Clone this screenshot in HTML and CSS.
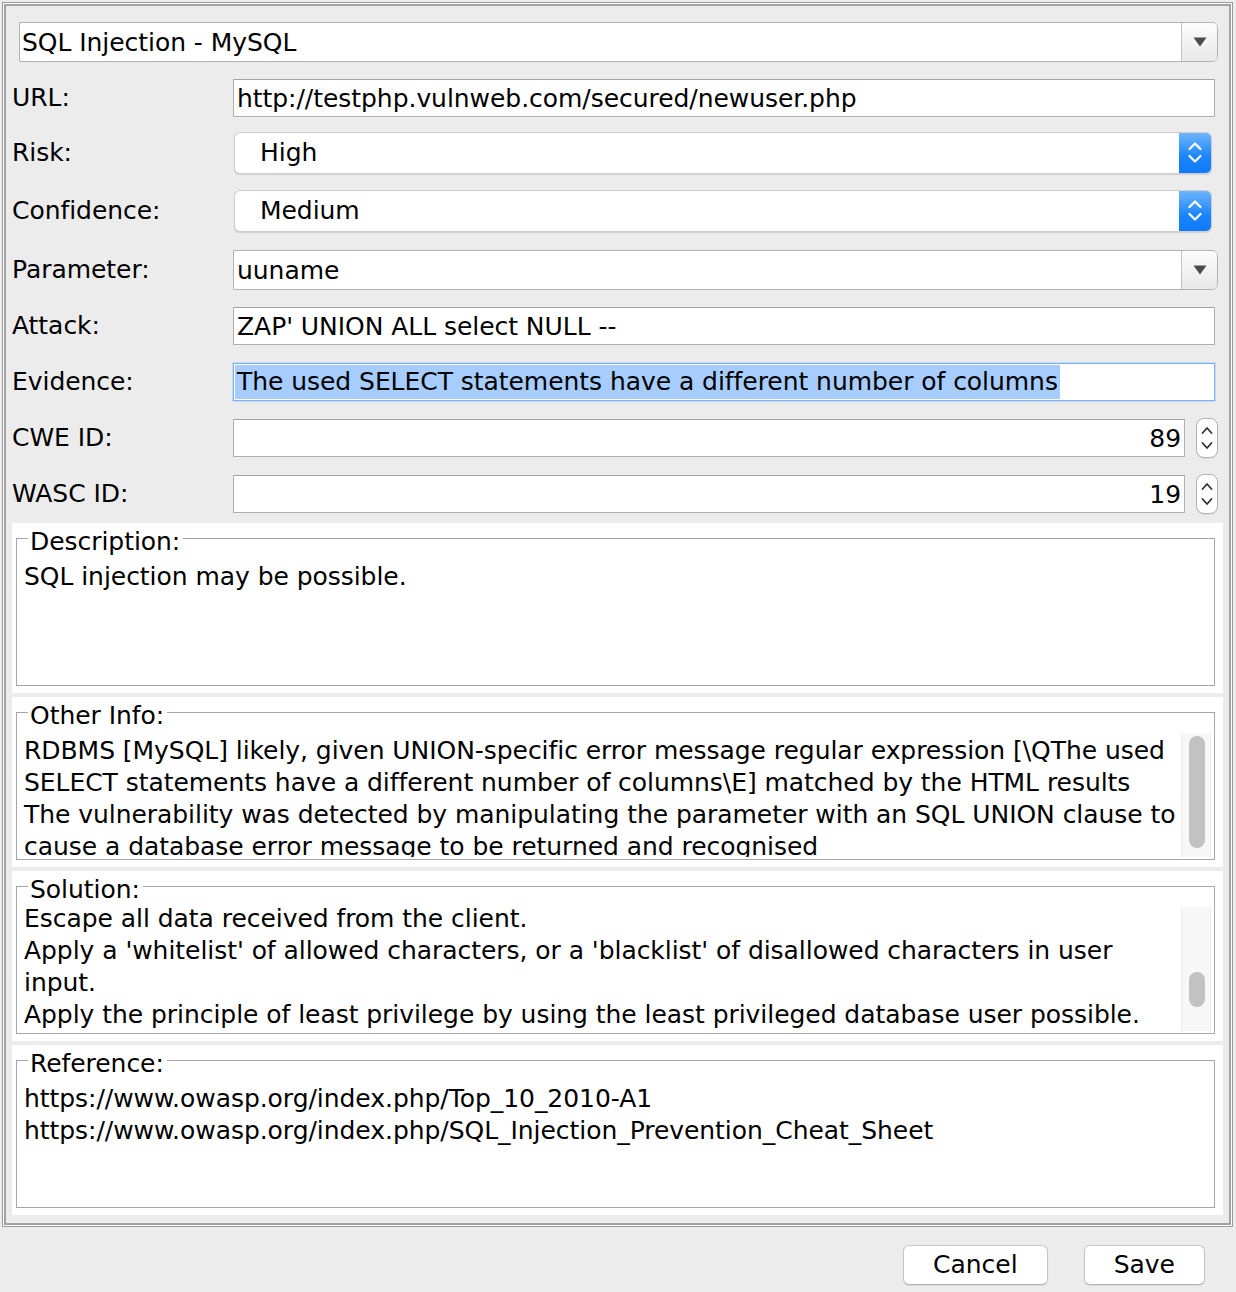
FILE: index.html
```html
<!DOCTYPE html>
<html lang="en">
<head>
<meta charset="utf-8">
<title>Edit Alert</title>
<link rel="stylesheet" href="styles.css">
</head>
<body>
<div class="frame">
  <div class="frame-inner">
    <div class="form">
      <div class="row">
        <div class="combo combo-main">
          <span class="combo-text">SQL Injection - MySQL</span>
          <span class="combo-btn"><svg width="14" height="10" viewBox="0 0 14 10"><path d="M0.5 0.5 H13.5 L7 9.5 Z" fill="#4a4a4a"/></svg></span>
        </div>
      </div>
      <div class="row">
        <span class="lbl">URL:</span>
        <div class="field field-text">http://testphp.vulnweb.com/secured/newuser.php</div>
      </div>
      <div class="row row-short">
        <span class="lbl">Risk:</span>
        <div class="popup">
          <span class="popup-text">High</span>
          <span class="popup-step"><svg width="14" height="26" viewBox="0 0 14 26"><path d="M1.5 9 L7 3.5 L12.5 9 M1.5 16 L7 21.5 L12.5 16" fill="none" stroke="#fff" stroke-width="2.2" stroke-linecap="round" stroke-linejoin="round"/></svg></span>
        </div>
      </div>
      <div class="row row-tall">
        <span class="lbl">Confidence:</span>
        <div class="popup">
          <span class="popup-text">Medium</span>
          <span class="popup-step"><svg width="14" height="26" viewBox="0 0 14 26"><path d="M1.5 9 L7 3.5 L12.5 9 M1.5 16 L7 21.5 L12.5 16" fill="none" stroke="#fff" stroke-width="2.2" stroke-linecap="round" stroke-linejoin="round"/></svg></span>
        </div>
      </div>
      <div class="row">
        <span class="lbl">Parameter:</span>
        <div class="combo">
          <span class="combo-text combo-text-param">uuname</span>
          <span class="combo-btn"><svg width="14" height="10" viewBox="0 0 14 10"><path d="M0.5 0.5 H13.5 L7 9.5 Z" fill="#4a4a4a"/></svg></span>
        </div>
      </div>
      <div class="row">
        <span class="lbl">Attack:</span>
        <div class="field field-text">ZAP' UNION ALL select NULL --</div>
      </div>
      <div class="row">
        <span class="lbl">Evidence:</span>
        <div class="field field-text field-focus"><span class="sel">The used SELECT statements have a different number of columns</span></div>
      </div>
      <div class="row">
        <span class="lbl">CWE ID:</span>
        <div class="field field-num">89</div>
        <span class="spinner"><svg width="12" height="28" viewBox="0 0 12 28"><path d="M1.5 9 L6 4 L10.5 9 M1.5 19 L6 24 L10.5 19" fill="none" stroke="#333" stroke-width="1.8" stroke-linecap="round" stroke-linejoin="round"/></svg></span>
      </div>
      <div class="row">
        <span class="lbl">WASC ID:</span>
        <div class="field field-num">19</div>
        <span class="spinner"><svg width="12" height="28" viewBox="0 0 12 28"><path d="M1.5 9 L6 4 L10.5 9 M1.5 19 L6 24 L10.5 19" fill="none" stroke="#333" stroke-width="1.8" stroke-linecap="round" stroke-linejoin="round"/></svg></span>
      </div>
    </div>

    <section class="panel">
      <fieldset class="group">
        <legend class="group-title">Description:</legend>
        <div class="pane">
          <div class="pane-text">
            <span class="line">SQL injection may be possible.</span>
          </div>
        </div>
      </fieldset>
    </section>

    <section class="panel">
      <fieldset class="group">
        <legend class="group-title">Other Info:</legend>
        <div class="pane">
          <div class="pane-text">
            <span class="line">RDBMS [MySQL] likely, given UNION-specific error message regular expression [\QThe used</span>
            <span class="line">SELECT statements have a different number of columns\E] matched by the HTML results</span>
            <span class="line">The vulnerability was detected by manipulating the parameter with an SQL UNION clause to</span>
            <span class="line">cause a database error message to be returned and recognised</span>
          </div>
          <div class="scrollbar"><div class="thumb" style="margin-top:3px;height:112px"></div></div>
        </div>
      </fieldset>
    </section>

    <section class="panel">
      <fieldset class="group">
        <legend class="group-title">Solution:</legend>
        <div class="pane">
          <div class="pane-text pane-scrolled">
            <span class="line">Escape all data received from the client.</span>
            <span class="line">Apply a 'whitelist' of allowed characters, or a 'blacklist' of disallowed characters in user</span>
            <span class="line">input.</span>
            <span class="line">Apply the principle of least privilege by using the least privileged database user possible.</span>
          </div>
          <div class="scrollbar"><div class="thumb" style="margin-top:65px;height:35px"></div></div>
        </div>
      </fieldset>
    </section>

    <section class="panel panel-last">
      <fieldset class="group">
        <legend class="group-title">Reference:</legend>
        <div class="pane">
          <div class="pane-text">
            <span class="line">https://www.owasp.org/index.php/Top_10_2010-A1</span>
            <span class="line">https://www.owasp.org/index.php/SQL_Injection_Prevention_Cheat_Sheet</span>
          </div>
        </div>
      </fieldset>
    </section>
  </div>
</div>

<div class="actions">
  <button class="btn" type="button">Cancel</button>
  <button class="btn" type="button">Save</button>
</div>
</body>
</html>
```

FILE: styles.css
```css
* {
  box-sizing: border-box;
}

html,
body {
  margin: 0;
  background: #ececec;
}

body {
  font-family: "DejaVu Sans", "Liberation Sans", sans-serif;
  font-size: 25px;
  letter-spacing: -0.05px;
  line-height: 32px;
  color: #000;
  width: 1236px;
  height: 1292px;
  overflow: hidden;
}

/* outer double frame */
.frame {
  margin: 2px 3px 0 2px;
  border: 1px solid #9c9c9c;
  padding: 1px;
  background: #fbfbfb;
}

.frame-inner {
  border: 2px solid #a2a2a2;
  background: #ececec;
  padding-bottom: 8px;
}

/* top form */
.form {
  padding: 8px 11px 1px 6px;
}

.row {
  display: flex;
  align-items: center;
  height: 56px;
}

.row-short {
  height: 54px;
}

.row-tall {
  height: 62px;
}

.lbl {
  width: 221px;
  flex: none;
  white-space: nowrap;
}

/* editable combo with arrow button */
.combo {
  flex: 1;
  height: 40px;
  display: flex;
  background: #fff;
  border: 1px solid #b3b3b3;
  border-radius: 0 6px 6px 0;
}

.combo-main {
  margin-left: 7px;
}

.combo-text {
  flex: 1;
  padding-left: 2px;
  line-height: 39px;
  white-space: nowrap;
  overflow: hidden;
}

.combo-text-param {
  padding-left: 3px;
}

.combo-btn {
  width: 36px;
  flex: none;
  display: flex;
  align-items: center;
  justify-content: center;
  border-left: 1px solid #c4c4c4;
  border-radius: 0 5px 5px 0;
  background: linear-gradient(#fcfcfc, #e8e8e8);
}

/* text fields */
.field {
  flex: 1;
  height: 38px;
  background: #fff;
  border: 1px solid #b0b0b0;
  border-top-color: #a4a4a4;
  line-height: 37px;
  white-space: nowrap;
  overflow: hidden;
}

.field-text {
  margin-right: 3px;
  padding: 0 3px;
}

.field-focus {
  padding-left: 1px;
  border-color: #7eb1ee;
  box-shadow: 0 0 0 1px #c3dbf8;
}

.sel {
  display: inline-block;
  background: #a6cdfe;
  line-height: 34px;
  padding: 0 2px;
  vertical-align: top;
  margin-top: 1px;
}

.field-num {
  text-align: right;
  padding: 0 3px;
}

.spinner {
  width: 22px;
  height: 40px;
  flex: none;
  margin-left: 11px;
  display: flex;
  align-items: center;
  justify-content: center;
  background: #fff;
  border: 1px solid #b2b2b2;
  border-radius: 8px;
  box-shadow: 0 1px 0 rgba(0, 0, 0, 0.06);
}

/* popup button (mac style) */
.popup {
  flex: 1;
  height: 40px;
  margin: 0 7px 0 2px;
  display: flex;
  background: #fff;
  border-radius: 5px;
  box-shadow: 0 0 0 1px #cdcdcd, 0 1px 1px 1px rgba(0, 0, 0, 0.12);
}

.popup-text {
  flex: 1;
  padding-left: 25px;
  line-height: 39px;
  white-space: nowrap;
}

.popup-step {
  width: 32px;
  flex: none;
  display: flex;
  align-items: center;
  justify-content: center;
  border-radius: 0 5px 5px 0;
  background: linear-gradient(#6fb5fb, #1b84fb 60%, #0f7af9);
}

/* titled panels */
.panel {
  height: 170px;
  margin: 0 6px 4px;
  padding: 0 8px 7px 4px;
  background: #fff;
  display: flex;
  flex-direction: column;
}

.panel-last {
  margin-bottom: 0;
}

.group {
  flex: 1;
  min-height: 0;
  margin: -4px 0 0;
  border: 1px solid #a6a6a6;
  padding: 1px 3px 2px;
  display: flex;
  flex-direction: column;
  min-width: 0;
}

.group-title {
  margin-left: 8px;
  padding: 7px 3px 0 2px;
  line-height: 32px;
  white-space: nowrap;
}

.pane {
  flex: 1;
  min-height: 0;
  display: flex;
  overflow: hidden;
}

.pane-text {
  flex: 1;
  min-width: 0;
  padding: 2px 4px 0;
  white-space: nowrap;
  overflow: hidden;
}

.pane-scrolled {
  padding-top: 0;
  margin-top: -4px;
}

.line {
  display: block;
}

.scrollbar {
  width: 30px;
  flex: none;
  background: #f7f7f7;
  border-left: 1px solid #ebebeb;
  border-right: 1px solid #ebebeb;
  padding-left: 7px;
}

.thumb {
  width: 16px;
  border-radius: 8px;
  background: #c2c2c2;
}

/* dialog buttons */
.actions {
  display: flex;
  justify-content: flex-end;
  gap: 36px;
  padding: 18px 31px 0 0;
}

.btn {
  height: 40px;
  padding: 0 29px;
  font: inherit;
  line-height: 38px;
  color: #000;
  background: #fff;
  border: 1px solid #c6c6c6;
  border-bottom-color: #b2b2b2;
  border-radius: 6px;
  box-shadow: 0 1px 1px rgba(0, 0, 0, 0.08);
}
```
